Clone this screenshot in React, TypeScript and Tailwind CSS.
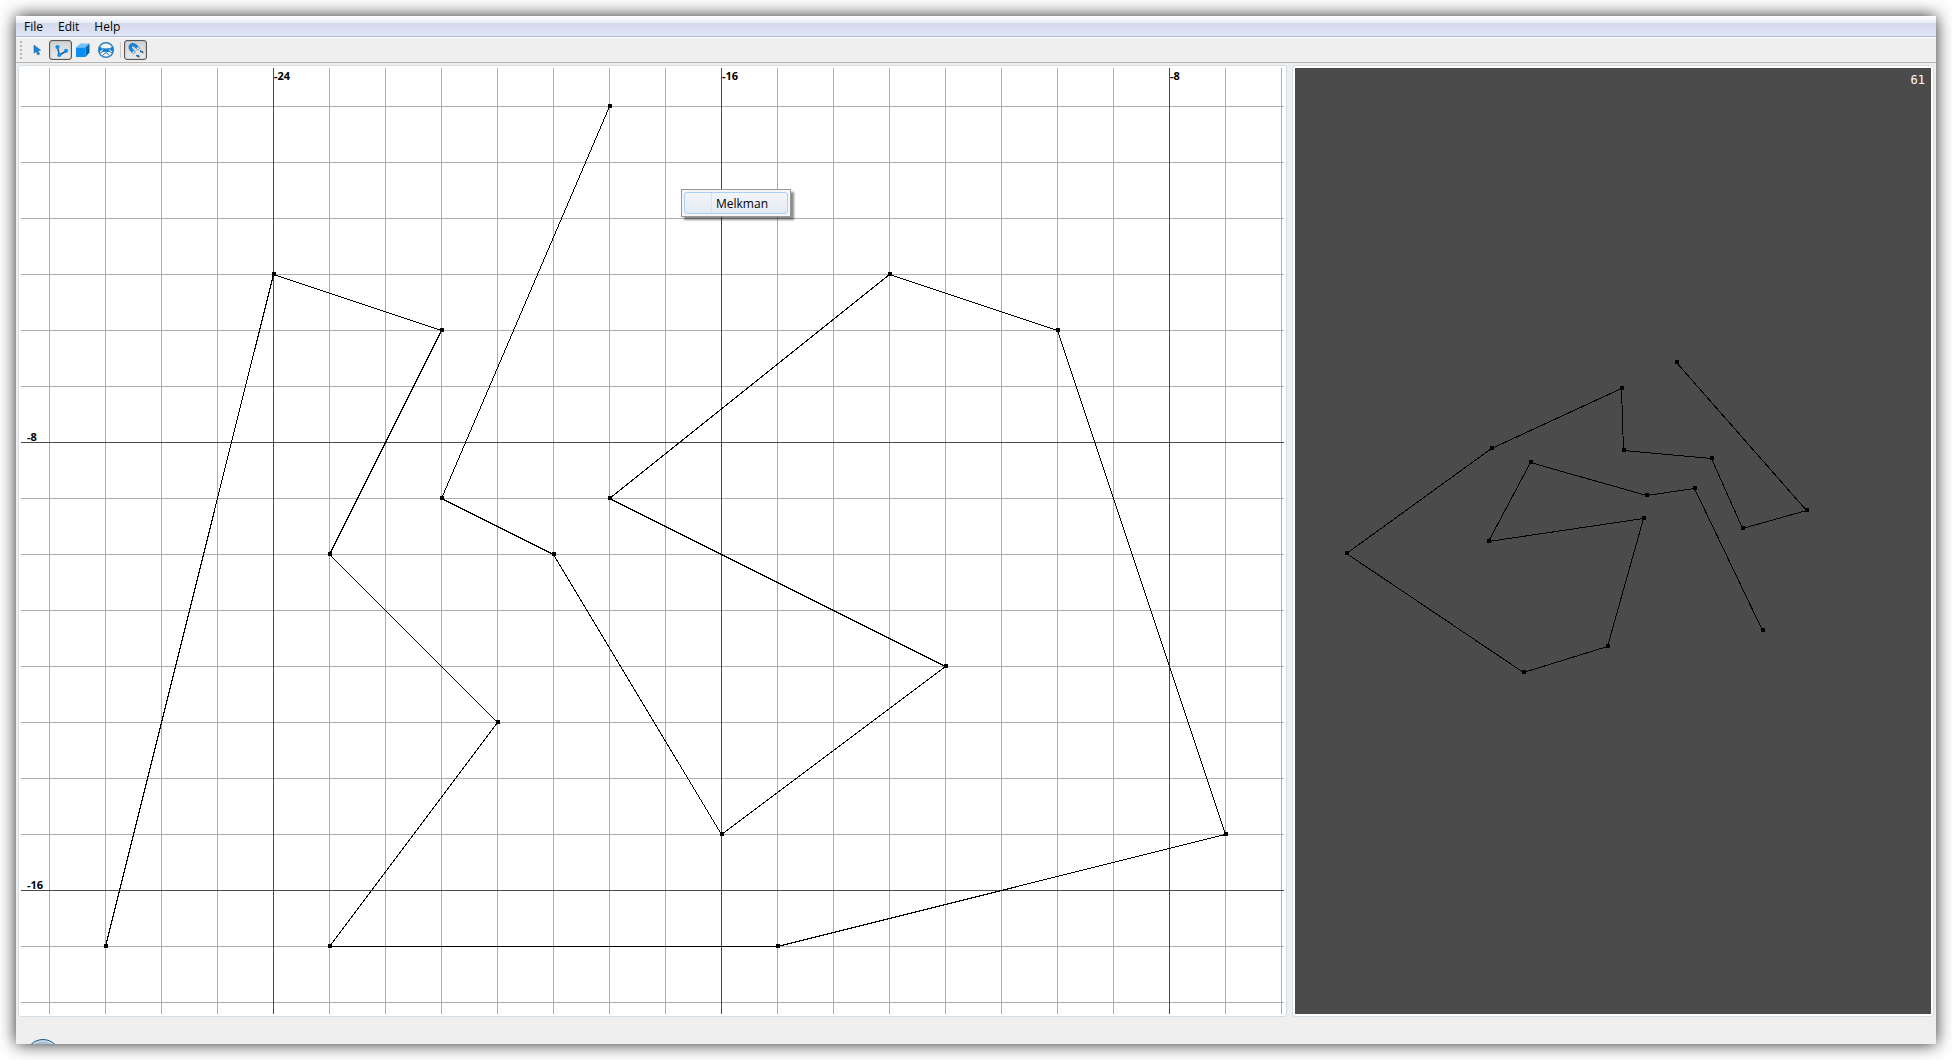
import { useState, type ReactNode } from "react";

type Point = [number, number];

const UNIT = 56;
const toX = (x: number) => 252 + (x + 24) * UNIT;
const toY = (y: number) => 374 - (y + 8) * UNIT;

const COLUMNS = Array.from({ length: 64 }, (_, i) => i - 28);
const ROWS = Array.from({ length: 40 }, (_, i) => -2 - i);
const COLUMN_LABELS = [-24, -16, -8];
const ROW_LABELS = [-8, -16];

const CHAIN: Point[] = [
  [-27, -17], [-24, -5], [-21, -6], [-23, -10], [-20, -13], [-23, -17], [-15, -17], [-7, -15],
  [-10, -6], [-13, -5], [-18, -9], [-12, -12], [-16, -15], [-19, -10], [-21, -9], [-18, -2],
];

const SCENE: Point[] = [
  [381, 294], [511, 442], [447, 460], [416, 390], [328, 382], [326, 320], [196, 380], [51, 485],
  [228, 604], [312, 578], [348, 450], [193, 473], [235, 394], [351, 427], [399, 420], [467, 562],
];

function Chain({ points }: { points: Point[] }) {
  return (
    <g shapeRendering="crispEdges">
      <polyline points={points.map((p) => `${p[0] + 0.5},${p[1] + 0.5}`).join(" ")} fill="none" stroke="#000" />
      {points.map(([x, y]) => (
        <rect key={`${x},${y}`} x={x - 1} y={y - 2} width="4" height="4" fill="#000" />
      ))}
    </g>
  );
}

function Plane() {
  const major = (n: number) => n % 8 === 0;
  return (
    <svg className="absolute inset-0 size-full" role="img" aria-label="Polygonal chain on a grid">
      <g shapeRendering="crispEdges">
        {COLUMNS.filter((c) => !major(c)).map((c) => (
          <rect key={c} x={toX(c)} y="0" width="1" height="100%" fill="#adadad" />
        ))}
        {ROWS.filter((r) => !major(r)).map((r) => (
          <rect key={r} x="0" y={toY(r)} width="100%" height="1" fill="#adadad" />
        ))}
        {COLUMNS.filter(major).map((c) => (
          <rect key={c} x={toX(c)} y="0" width="1" height="100%" fill="#4a4a4a" />
        ))}
        {ROWS.filter(major).map((r) => (
          <rect key={r} x="0" y={toY(r)} width="100%" height="1" fill="#4a4a4a" />
        ))}
      </g>
      <g className="font-['Open_Sans',sans-serif] text-[11px] font-bold" fill="#000">
        {COLUMN_LABELS.map((c) => (
          <text key={c} x={toX(c) + 1} y="12">{c}</text>
        ))}
        {ROW_LABELS.map((r) => (
          <text key={r} x="6" y={toY(r) - 1}>{r}</text>
        ))}
      </g>
      <Chain points={CHAIN.map(([x, y]): Point => [toX(x), toY(y)])} />
    </svg>
  );
}

function CursorIcon() {
  return (
    <svg viewBox="0 0 18 18" className="size-[18px]">
      <path d="M6 4v8.200l2.100-1.700 1.700 3.500 1.900-1-1.800-3.300 2.800-.400z" fill="#0a84dc" stroke="#3f6f99" strokeWidth=".6" />
    </svg>
  );
}

function ChainIcon() {
  return (
    <svg viewBox="0 0 18 18" className="size-[18px]">
      <path d="M5.500 6l1.800 8 7-4" fill="none" stroke="#2b5d85" strokeWidth="1.500" />
      <g fill="#0d8ff0">
        <circle cx="5.500" cy="6" r="2.100" />
        <circle cx="7.300" cy="14" r="2.100" />
        <circle cx="14" cy="9.800" r="2.100" />
      </g>
    </svg>
  );
}

function CubeIcon() {
  return (
    <svg viewBox="0 0 18 18" className="size-[18px]">
      <path d="M2 6.500L6.500 2.500H15.500L11.500 6.500z" fill="#6fc0fb" />
      <path d="M11.500 6.500l4-4v9l-4 4.500z" fill="#0067b3" />
      <path d="M2 6.500H11.500v9.500H2z" fill="#0b8df2" />
    </svg>
  );
}

function SphereIcon() {
  return (
    <svg viewBox="0 0 18 18" className="size-[18px]">
      <circle cx="9" cy="9" r="7.300" fill="#f4f8fb" stroke="#2a7dbd" strokeWidth="1.400" />
      <path d="M3 6.500l3 1.500h6l3-1.500M2.500 12.500l3.500-2.200h6l3.500 2.200M5.500 14.500l3.500-3 3.500 3" fill="none" stroke="#2c6fa5" strokeWidth="1" />
      <path d="M5 10.500l1.500-3.200L9 8.200l2.500-.900L13 10.500l-2.200.300L9 10l-1.800.800zM2 6l3.500 2.300L2 11.500zM16 6l-3.500 2.300L16 11.500z" fill="#0a82dd" />
    </svg>
  );
}

function MagnetIcon() {
  return (
    <svg viewBox="0 0 18 18" className="size-[18px]">
      <path d="M11.800 8.200L8.300 4.700C5.500 2 1.500 5 4.200 8.600L7.600 12.200" fill="none" stroke="#1c5f92" strokeWidth="3.200" />
      <path d="M10.300 6.700L8.300 4.700C5.500 2 1.500 5 4.200 8.600L6.200 10.700" fill="none" stroke="#0f8cf0" strokeWidth="2.200" />
      <path d="M11.500 7.900l-1.300-1.300M7.300 11.900L6 10.500" fill="none" stroke="#e6edf3" strokeWidth="2.200" />
      <path d="M13.200 9.300l.7 1.500 1.300-.3.900 1.700M9.300 14l1 1.200 1.200-.600.900 1.900" fill="none" stroke="#2f6590" strokeWidth="1.300" />
    </svg>
  );
}

function ToolButton({ label, pressed, onClick, wide, children }: {
  label: string; pressed: boolean; onClick: () => void; wide?: boolean; children: ReactNode;
}) {
  return (
    <button
      type="button"
      aria-label={label}
      aria-pressed={pressed}
      onClick={onClick}
      className={`flex h-5 items-center justify-center rounded-[3px] border ${wide ? "w-[23px]" : "w-[22px]"} ${
        pressed ? "border-[#555] bg-linear-to-b from-[#d2d2d2] to-[#ececec] shadow-[inset_0_0_2px_#999]" : "border-transparent"
      }`}
    >
      {children}
    </button>
  );
}

const PANE = "relative flex rounded-[3px] border border-[#d3dde6] bg-white p-0.5";

export default function App() {
  const [tool, setTool] = useState("chain");
  const [snap, setSnap] = useState(true);
  return (
    <div className="flex min-h-screen bg-white p-4 font-['Open_Sans',sans-serif] text-xs text-black">
      <div className="flex flex-1 flex-col bg-[#efefef] shadow-[0_0_16px_rgba(0,0,0,0.85)]">
        <nav aria-label="Main menu" className="flex h-[21px] items-end gap-[15px] border-b border-[#b0b9d3] bg-[linear-gradient(#fff,#e6ebf4_7px,#d4daed_7px,#dfe5f5)] pl-2">
          {["File", "Edit", "Help"].map((name) => (
            <button key={name} type="button" className="leading-[18px]">{name}</button>
          ))}
        </nav>
        <div role="toolbar" aria-label="Tools" className="flex h-[26px] items-center border-t border-b border-t-white border-b-[#b5b5b5] pl-1">
          <span className="mr-1 h-[19px] w-[2px] bg-[repeating-linear-gradient(#b9b9b9_0_2px,transparent_2px_4px)]" />
          <ToolButton label="Select" pressed={tool === "select"} onClick={() => setTool("select")}><CursorIcon /></ToolButton>
          <span className="w-px" />
          <ToolButton label="Polygonal chain" wide pressed={tool === "chain"} onClick={() => setTool("chain")}><ChainIcon /></ToolButton>
          <ToolButton label="Cube" pressed={tool === "cube"} onClick={() => setTool("cube")}><CubeIcon /></ToolButton>
          <ToolButton label="Sphere" wide pressed={tool === "sphere"} onClick={() => setTool("sphere")}><SphereIcon /></ToolButton>
          <span className="mx-[3px] h-4 w-px bg-[#c9c9c9]" />
          <ToolButton label="Snap to grid" wide pressed={snap} onClick={() => setSnap(!snap)}><MagnetIcon /></ToolButton>
        </div>
        <main className="flex flex-1 gap-[5px] px-0.5 pt-0.5">
          <section aria-label="Plane" className={`${PANE} flex-1`}>
            <div className="relative flex-1 overflow-hidden bg-white">
              <Plane />
            </div>
            <div role="menu" className="absolute top-[123px] left-[662px] flex w-[110px] border border-[#979797] bg-[#f5f5f5] p-0.5 shadow-[3px_3px_2px_rgba(0,0,0,0.45)]">
              <button type="button" role="menuitem" className="flex h-[22px] flex-1 items-stretch rounded-[3px] border border-[#aecff7] bg-linear-to-b from-[#f2f5f9] to-[#e5ebf4] text-left">
                <span className="mr-1 w-[27px] border-r border-[#d9e2ec]" />
                <span className="leading-[22px]">Melkman</span>
              </button>
            </div>
          </section>
          <section aria-label="Scene" className={`${PANE} w-[33.5%]`}>
            <div className="relative flex-1 overflow-hidden bg-[#4b4b4b]">
              <svg className="absolute inset-0 size-full" role="img" aria-label="Transformed chain">
                <Chain points={SCENE} />
              </svg>
              <output className="absolute top-1 right-1.5 font-['DejaVu_Sans_Mono',monospace] leading-4 text-white">61</output>
            </div>
          </section>
        </main>
        <footer className="flex h-[27px] items-end pl-[15px]">
          <svg viewBox="0 0 24 5" className="h-[5px] w-6" aria-hidden="true">
            <circle cx="12" cy="17.500" r="17" fill="#c3d5e3" stroke="#1f5688" />
            <circle cx="12" cy="20" r="17" fill="#a5bed2" />
          </svg>
        </footer>
      </div>
    </div>
  );
}
